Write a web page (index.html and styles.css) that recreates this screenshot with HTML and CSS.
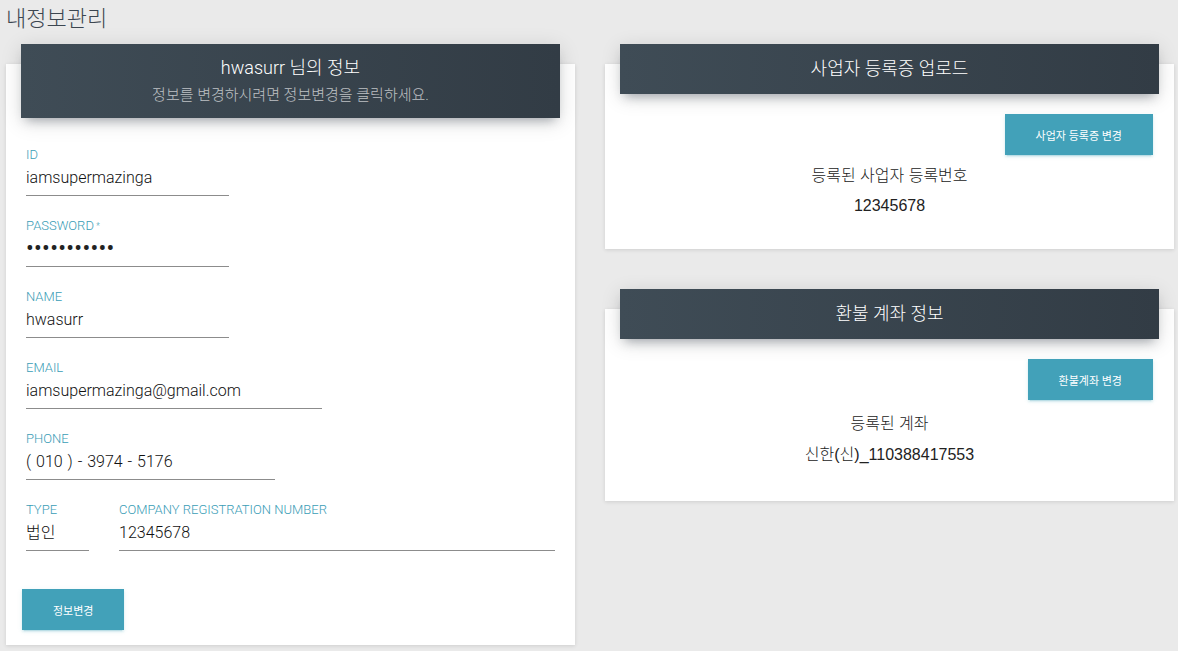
FILE: index.html
```html
<!DOCTYPE html>
<html lang="ko">
<head>
<meta charset="utf-8">
<title>내정보관리</title>
<link rel="stylesheet" href="styles.css">
</head>
<body>
<div class="page">
  <h1 class="page-title">내정보관리</h1>
  <div class="columns">
    <div class="col">
      <section class="card">
        <header class="card-header card-header--tall">
          <h2 class="card-title">hwasurr 님의 정보</h2>
          <p class="card-sub">정보를 변경하시려면 정보변경을 클릭하세요.</p>
        </header>
        <div class="card-body">
          <div class="field field--w203">
            <div class="field-label">ID</div>
            <div class="field-value">iamsupermazinga</div>
          </div>
          <div class="field field--w203">
            <div class="field-label">PASSWORD<span class="req">*</span></div>
            <div class="field-value field-value--dots">•••••••••••</div>
          </div>
          <div class="field field--w203">
            <div class="field-label">NAME</div>
            <div class="field-value">hwasurr</div>
          </div>
          <div class="field field--w296">
            <div class="field-label">EMAIL</div>
            <div class="field-value">iamsupermazinga@gmail.com</div>
          </div>
          <div class="field field--w249">
            <div class="field-label">PHONE</div>
            <div class="field-value field-value--spaced">( 010 ) - 3974 - 5176</div>
          </div>
          <div class="field-row">
            <div class="field field--w63">
              <div class="field-label">TYPE</div>
              <div class="field-value">법인</div>
            </div>
            <div class="field field--grow">
              <div class="field-label">COMPANY REGISTRATION NUMBER</div>
              <div class="field-value">12345678</div>
            </div>
          </div>
          <button class="btn btn--form">정보변경</button>
        </div>
      </section>
    </div>
    <div class="col">
      <section class="card">
        <header class="card-header">
          <h2 class="card-title">사업자 등록증 업로드</h2>
        </header>
        <div class="card-body card-body--center">
          <div class="btn-row"><button class="btn">사업자 등록증 변경</button></div>
          <p class="info-line info-line--first">등록된 사업자 등록번호</p>
          <p class="info-line">12345678</p>
        </div>
      </section>
      <section class="card card--second">
        <header class="card-header">
          <h2 class="card-title">환불 계좌 정보</h2>
        </header>
        <div class="card-body card-body--center card-body--account">
          <div class="btn-row"><button class="btn">환불계좌 변경</button></div>
          <p class="info-line info-line--first">등록된 계좌</p>
          <p class="info-line">신한(신)_110388417553</p>
        </div>
      </section>
    </div>
  </div>
</div>
</body>
</html>
```

FILE: styles.css
```css
* { box-sizing: border-box; }
html, body {
  margin: 0;
  padding: 0;
  background: #eaeaea;
  font-family: Roboto, "Noto Sans CJK KR", "Liberation Sans", sans-serif;
  font-weight: 300;
  color: #333;
}
.page {
  padding: 0 4px 0 6px;
  height: 651px;
  overflow: hidden;
}
.page-title {
  margin: 0;
  height: 44px;
  padding-top: 3px;
  font-size: 22px;
  line-height: 32px;
  font-weight: 300;
  color: #3c4650;
}
.columns {
  display: flex;
  gap: 30px;
  align-items: flex-start;
}
.col {
  flex: 1 1 0;
  min-width: 0;
  display: flex;
  flex-direction: column;
}
.card {
  background: #fff;
  margin-top: 20px;
  box-shadow: 0 1px 4px rgba(0, 0, 0, 0.12);
}
.card--second {
  margin-top: 60px;
}
.card-header {
  margin: -20px 15px 0;
  height: 50px;
  background: linear-gradient(90deg, #3f4c56, #323c45);
  box-shadow: 0 4px 20px 0 rgba(0, 0, 0, 0.14), 0 7px 10px -5px rgba(60, 72, 88, 0.4);
  color: #fff;
  text-align: center;
  display: flex;
  flex-direction: column;
  justify-content: center;
}
.card-header--tall {
  height: 74px;
  justify-content: flex-start;
  padding-top: 13px;
}
.card-title {
  margin: 0;
  font-size: 18px;
  line-height: 22px;
  font-weight: 300;
}
.card-sub {
  margin: 6px 0 0;
  font-size: 15px;
  line-height: 20px;
  font-weight: 300;
  color: rgba(255, 255, 255, 0.68);
}
.card-body {
  padding: 30px 20px 15px;
}
.field {
  margin-bottom: 23px;
}
.field--w203 { width: 203px; }
.field--w296 { width: 296px; }
.field--w249 { width: 249px; }
.field--w63 { width: 63px; }
.field--grow { flex: 1 1 0; }
.field-row {
  display: flex;
  gap: 30px;
}
.field-label {
  font-size: 13px;
  line-height: 14px;
  color: #3a9db6;
  font-weight: 300;
}
.req {
  font-size: 9px;
  vertical-align: top;
  margin-left: 2px;
}
.field-value {
  margin-top: 6px;
  font-size: 16px;
  line-height: 20px;
  padding-bottom: 7px;
  border-bottom: 1px solid #8c8c8c;
  color: #111;
  font-weight: 300;
  white-space: nowrap;
}
.field-value--spaced {
  word-spacing: 1px;
}
.field-value--dots {
  font-size: 23px;
  letter-spacing: 0.3px;
  color: #222;
  font-weight: 400;
}
.btn {
  height: 41px;
  padding: 0 31px;
  border: 0;
  background: #42a1b9;
  color: #fff;
  font-family: Roboto, "Noto Sans CJK KR", sans-serif;
  font-size: 11px;
  font-weight: 400;
  cursor: pointer;
  box-shadow: 0 2px 2px 0 rgba(66, 161, 185, 0.14), 0 3px 1px -2px rgba(66, 161, 185, 0.2), 0 1px 5px 0 rgba(66, 161, 185, 0.12);
}
.btn--form {
  margin-top: 15px;
  margin-left: -4px;
}
.card-body--center {
  padding: 20px 21px 28px;
  text-align: center;
}
.card-body--account {
  padding-bottom: 31px;
}
.btn-row {
  display: flex;
  justify-content: flex-end;
}
.info-line {
  margin: 0;
  font-family: "Liberation Sans", "Noto Sans CJK KR", sans-serif;
  font-size: 16px;
  font-weight: 300;
  line-height: 30px;
  color: #222;
}
.info-line--first {
  margin-top: 6px;
}
.card-body--account .info-line--first {
  margin-top: 9px;
}
.card-body--account .info-line + .info-line {
  margin-top: 1px;
}
```
